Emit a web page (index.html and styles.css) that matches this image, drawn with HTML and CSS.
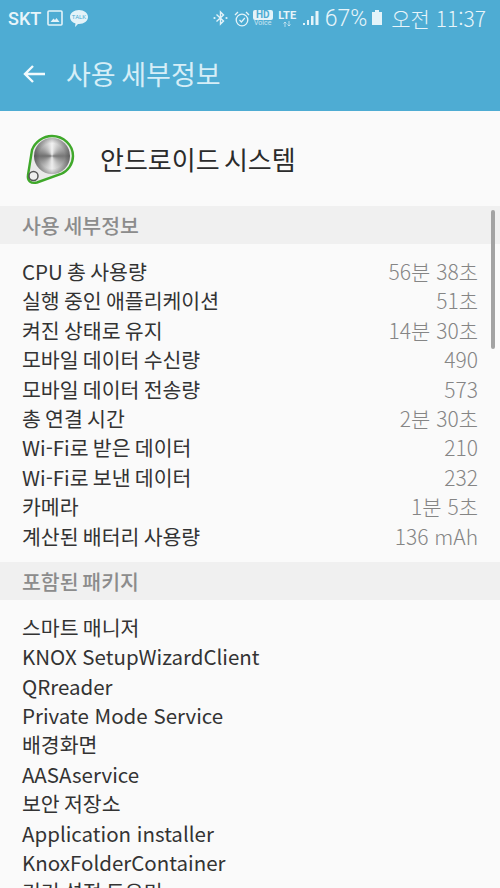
FILE: index.html
```html
<!DOCTYPE html>
<html lang="ko">
  <head>
    <meta charset="UTF-8" />
    <title>사용 세부정보</title>
    <link rel="stylesheet" href="styles.css">
  </head>
  <body>
    <div class="screen">
      <div class="topbar">
        <div class="statusbar">
          <div class="status-left">
            <span class="carrier">SKT</span>
            <svg class="icon-gallery" width="16" height="16" viewBox="0 0 16 16">
              <rect x="1" y="1" width="14" height="14" rx="1" fill="none" stroke="#e4f3f9" stroke-width="1.6" />
              <path d="M3.500 12 L6.500 8.500 L8 10 L9.500 8 L12.500 12 Z" fill="#e4f3f9" />
            </svg>
            <svg class="icon-talk" width="20" height="19" viewBox="0 0 20 19">
              <path d="M10 1 C15 1 19 4 19 8 C19 12 15 15 10 15 L9 15 L6 18 L6.500 14.400 C3 13.400 1 11 1 8 C1 4 5 1 10 1 Z" fill="#e4f3f9" />
              <text x="10" y="10" class="talk-label">TALK</text>
            </svg>
          </div>
          <div class="status-right">
            <svg class="st-bt" width="15" height="16" viewBox="0 0 15 16">
              <path d="M3.500 4.500 L10.500 11 L7.500 14 L7.500 2 L10.500 5 L3.500 11.500" fill="none" stroke="#e4f3f9" stroke-width="1.400" />
              <circle cx="1.500" cy="8" r="1.100" fill="#e4f3f9" />
              <circle cx="13.500" cy="8" r="1.100" fill="#e4f3f9" />
            </svg>
            <svg class="st-alarm" width="16" height="17" viewBox="0 0 16 17">
              <circle cx="8" cy="10" r="5.800" fill="none" stroke="#e4f3f9" stroke-width="1.300" />
              <path d="M5.500 10 L7.400 12 L10.800 8" fill="none" stroke="#e4f3f9" stroke-width="1.200" />
              <path d="M1 5 L4 2 M15 5 L12 2" stroke="#e4f3f9" stroke-width="1.400" />
            </svg>
            <div class="net-badge st-hd">
              <span class="hd">HD</span>
              <span class="net-sub">Voice</span>
            </div>
            <div class="net-badge st-lte">
              <span class="lte-label">LTE</span>
              <svg width="8" height="6" viewBox="0 0 8 6">
                <path d="M2 6 V1 M0.500 2.500 L2 1 L3.500 2.500 M6 0 V5 M4.500 3.500 L6 5 L7.500 3.500" fill="none" stroke="#cfe9f4" stroke-width="0.800" />
              </svg>
            </div>
            <svg class="st-signal" width="17" height="16" viewBox="0 0 17 16">
              <path d="M1 15 h2 v-2 h-2 Z M5 15 h2 v-5 h-2 Z M9 15 h2.500 v-9 h-2.500 Z M13.500 15 h3 v-14 h-3 Z" fill="#e4f3f9" />
            </svg>
            <span class="battery-pct">67%</span>
            <svg class="st-battery" width="12" height="16" viewBox="0 0 12 16">
              <rect x="4" y="0" width="4" height="2" fill="#e4f3f9" />
              <rect x="1" y="2" width="10" height="13" fill="#e4f3f9" />
            </svg>
            <span class="clock">오전 11:37</span>
          </div>
        </div>
        <div class="actionbar">
          <svg width="24" height="20" viewBox="0 0 24 20">
            <path d="M23 10 H3 M11 2 L3 10 L11 18" fill="none" stroke="#f2fafd" stroke-width="2.400" />
          </svg>
          <h1 class="page-title">사용 세부정보</h1>
        </div>
      </div>

      <div class="content">
        <div class="scrollbar"></div>

        <div class="app-row">
          <div class="app-icon">
            <svg width="52" height="52" viewBox="0 0 52 52">
              <path d="M28 3 C39.500 3 49 12 49 23 C49 31 44 38 37 41 L13 49.500 C7 51 3 48 4 42 L8 17 C11 9 19 3 28 3 Z" fill="#e9e9e9" stroke="#3fa82a" stroke-width="2.400" />
              <circle cx="9.500" cy="43" r="4.500" fill="#eeeeee" stroke="#555555" stroke-width="1.500" />
            </svg>
            <div class="app-disc"></div>
          </div>
          <span class="app-name">안드로이드 시스템</span>
        </div>

        <div class="section-header">사용 세부정보</div>
        <div class="rows">
          <div class="row"><span>CPU 총 사용량</span><span class="value">56분 38초</span></div>
          <div class="row"><span>실행 중인 애플리케이션</span><span class="value">51초</span></div>
          <div class="row"><span>켜진 상태로 유지</span><span class="value">14분 30초</span></div>
          <div class="row"><span>모바일 데이터 수신량</span><span class="value">490</span></div>
          <div class="row"><span>모바일 데이터 전송량</span><span class="value">573</span></div>
          <div class="row"><span>총 연결 시간</span><span class="value">2분 30초</span></div>
          <div class="row"><span>Wi-Fi로 받은 데이터</span><span class="value">210</span></div>
          <div class="row"><span>Wi-Fi로 보낸 데이터</span><span class="value">232</span></div>
          <div class="row"><span>카메라</span><span class="value">1분 5초</span></div>
          <div class="row"><span>계산된 배터리 사용량</span><span class="value">136 mAh</span></div>
        </div>

        <div class="section-header">포함된 패키지</div>
        <div class="rows">
          <div class="row">스마트 매니저</div>
          <div class="row latin">KNOX SetupWizardClient</div>
          <div class="row latin">QRreader</div>
          <div class="row latin">Private Mode Service</div>
          <div class="row">배경화면</div>
          <div class="row latin">AASAservice</div>
          <div class="row">보안 저장소</div>
          <div class="row latin">Application installer</div>
          <div class="row latin">KnoxFolderContainer</div>
          <div class="row">기기 설정 도우미</div>
        </div>
      </div>
    </div>
  </body>
</html>
```

FILE: styles.css
```css
html,
body {
  margin: 0;
  padding: 0;
}
body {
  width: 500px;
  height: 888px;
  overflow: hidden;
  font-family: "Noto Sans CJK KR", Roboto, sans-serif;
  background-color: #fafafa;
}
.screen {
  width: 500px;
  height: 888px;
  overflow: hidden;
}
.topbar {
  height: 111px;
  background-color: #4eacd3;
  color: #e8f5fa;
}
.statusbar {
  height: 36px;
  padding: 0 14px 0 8px;
  display: flex;
  justify-content: space-between;
  align-items: center;
}
.status-left,
.status-right {
  display: flex;
  align-items: center;
}
.status-left {
  gap: 6px;
}
.carrier {
  font-family: Roboto, sans-serif;
  font-size: 18px;
  font-weight: 500;
}
.talk-label {
  font-family: Roboto, sans-serif;
  font-size: 6px;
  fill: #4eacd3;
  text-anchor: middle;
}
.st-bt {
  margin-right: 6px;
}
.st-alarm {
  margin-right: 3px;
}
.net-badge {
  display: flex;
  flex-direction: column;
  align-items: center;
  font-family: Roboto, sans-serif;
  line-height: 1;
}
.st-hd {
  width: 20px;
  margin-right: 5px;
}
.st-lte {
  width: 19px;
  margin-right: 5px;
}
.hd {
  background-color: #e4f3f9;
  color: #4eacd3;
  border-radius: 2px;
  font-size: 10px;
  font-weight: 700;
  padding: 0 3px;
}
.lte-label {
  font-size: 11px;
  font-weight: 700;
}
.net-sub {
  font-size: 7px;
  opacity: 0.8;
}
.battery-pct {
  font-family: Roboto, sans-serif;
  font-size: 23px;
  font-weight: 300;
  margin-left: 6px;
}
.st-battery {
  margin-left: 4px;
}
.clock {
  font-size: 21px;
  font-weight: 300;
  margin-left: 8px;
}
.actionbar {
  height: 75px;
  padding-left: 22px;
  display: flex;
  align-items: center;
  gap: 20px;
}
.page-title {
  margin: 0;
  font-size: 27px;
  font-weight: 400;
  word-spacing: -2px;
  color: #d6eef7;
}
.content {
  position: relative;
}
.scrollbar {
  position: absolute;
  top: 99px;
  right: 5px;
  width: 4px;
  height: 139px;
  background-color: #a3a3a3;
  border-radius: 2px;
}
.app-row {
  height: 95px;
  padding-left: 24px;
  display: flex;
  align-items: center;
  gap: 24px;
}
.app-icon {
  position: relative;
  width: 52px;
  height: 52px;
  flex-shrink: 0;
}
.app-icon svg {
  display: block;
}
.app-disc {
  position: absolute;
  left: 10px;
  top: 5px;
  width: 36px;
  height: 36px;
  border-radius: 50%;
  background: radial-gradient(circle, transparent 50%, rgba(30, 30, 30, 0.7) 100%),
    conic-gradient(#f2f2f2, #777777 25%, #eeeeee 50%, #6f6f6f 75%, #f2f2f2);
}
.app-name {
  font-size: 26px;
  word-spacing: -3px;
  color: #2b2b2b;
}
.section-header {
  height: 38px;
  line-height: 38px;
  padding-left: 22px;
  background-color: #f0f0f0;
  color: #8c8c8c;
  font-size: 20.500px;
  font-weight: 500;
  word-spacing: -2px;
}
.rows {
  padding: 13px 22px 11px;
}
.row {
  height: 29.400px;
  line-height: 29.400px;
  display: flex;
  justify-content: space-between;
  font-size: 20.500px;
  word-spacing: -1.500px;
  color: #333333;
  white-space: nowrap;
}
.latin {
  word-spacing: 0;
}
.value {
  font-size: 21px;
  font-weight: 300;
  word-spacing: 0;
  color: #858585;
}
```
